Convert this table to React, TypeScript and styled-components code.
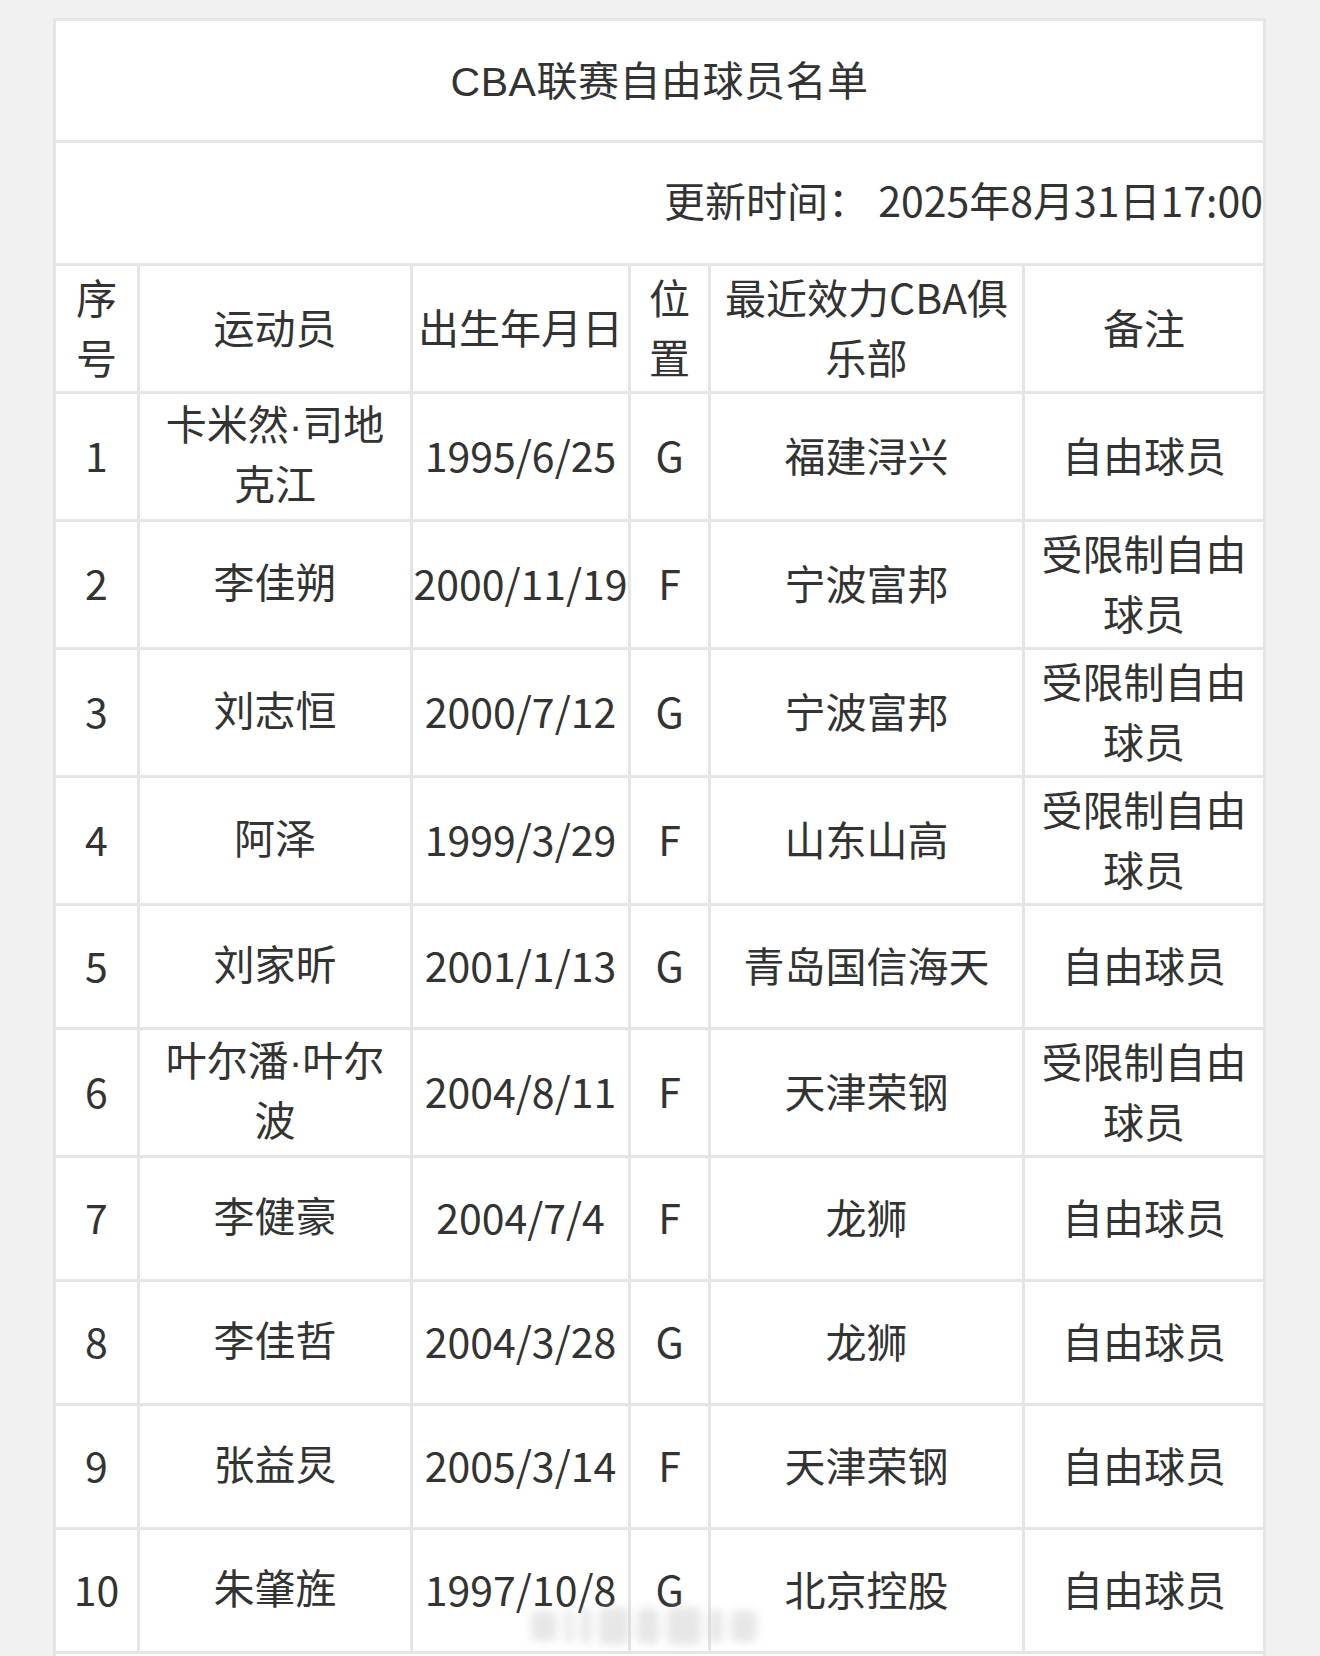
import { Fragment } from "react";
import styled, { createGlobalStyle } from "styled-components";

const GlobalStyle = createGlobalStyle`
  html, body {
    margin: 0;
    padding: 0;
    background: #f1f1f1;
  }
  body {
    font-family: "Noto Sans CJK SC", "Noto Sans", sans-serif;
    color: #333333;
  }
`

const Page = styled.section`
  min-height: 100vh;
  padding: 18px 0 0 53px;
  background-color: #f1f1f1;
`
const Table = styled.div`
  position: relative;
  display: grid;
  grid-template-columns: 81px 270px 215px 77px 311px 238px;
  grid-template-rows: 119px 120px;
  grid-auto-rows: minmax(121px, auto);
  gap: 3px;
  padding: 3px;
  width: max-content;
  background-color: #e5e5e5;
`
const TitleCell = styled.div`
  grid-column: 1 / -1;
  display: flex;
  align-items: center;
  justify-content: center;
  padding-bottom: 6px;
  background: #ffffff;
  font-family: "Liberation Sans", "Noto Sans CJK SC", sans-serif;
  font-size: 41px;
  letter-spacing: 0.5px;
  color: #333333;
`
const UpdateCell = styled.div`
  grid-column: 1 / -1;
  display: flex;
  align-items: center;
  justify-content: flex-end;
  padding-bottom: 8px;
  background: #ffffff;
  font-size: 41px;
  white-space: pre;
  color: #333333;
`
const Cell = styled.div<{ $pad?: number; $nowrap?: boolean }>`
  display: flex;
  align-items: center;
  justify-content: center;
  padding: 0 ${(p) => (p.$pad ?? 10)}px 5px;
  background: #ffffff;
  font-size: 41px;
  line-height: 60px;
  text-align: center;
  color: #333333;
  white-space: ${(p) => (p.$nowrap ? "nowrap" : "normal")};
`
/* names like 卡米然·司地克江 use the narrow Latin middle dot, so Latin font first */
const NameCell = styled(Cell)`
  padding-top: 2px;
  padding-bottom: 3px;
  font-family: "Liberation Sans", "Noto Sans CJK SC", sans-serif;
`
const FootCell = styled.div`
  grid-column: 1 / -1;
  background: #ffffff;
`
const Watermark = styled.div`
  position: absolute;
  left: 478px;
  top: 1588px;
  display: flex;
  align-items: center;
  gap: 8px;
  height: 40px;
  filter: blur(4px);
  opacity: 0.4;
  pointer-events: none;
`
const Blot = styled.span<{ $w: number; $h: number }>`
  display: block;
  width: ${(p) => p.$w}px;
  height: ${(p) => p.$h}px;
  border-radius: 6px;
  background: #c4c4c4;
`

interface Player {
  no: string;
  name: string;
  birth: string;
  pos: string;
  club: string;
  note: string;
}

const players: Player[] = [
  { no: "1", name: "卡米然·司地克江", birth: "1995/6/25", pos: "G", club: "福建浔兴", note: "自由球员" },
  { no: "2", name: "李佳朔", birth: "2000/11/19", pos: "F", club: "宁波富邦", note: "受限制自由球员" },
  { no: "3", name: "刘志恒", birth: "2000/7/12", pos: "G", club: "宁波富邦", note: "受限制自由球员" },
  { no: "4", name: "阿泽", birth: "1999/3/29", pos: "F", club: "山东山高", note: "受限制自由球员" },
  { no: "5", name: "刘家昕", birth: "2001/1/13", pos: "G", club: "青岛国信海天", note: "自由球员" },
  { no: "6", name: "叶尔潘·叶尔波", birth: "2004/8/11", pos: "F", club: "天津荣钢", note: "受限制自由球员" },
  { no: "7", name: "李健豪", birth: "2004/7/4", pos: "F", club: "龙狮", note: "自由球员" },
  { no: "8", name: "李佳哲", birth: "2004/3/28", pos: "G", club: "龙狮", note: "自由球员" },
  { no: "9", name: "张益炅", birth: "2005/3/14", pos: "F", club: "天津荣钢", note: "自由球员" },
  { no: "10", name: "朱肇旌", birth: "1997/10/8", pos: "G", club: "北京控股", note: "自由球员" },
];

export default function App() {
  return (
    <Page>
      <GlobalStyle />
      <Table>
        <TitleCell>CBA联赛自由球员名单</TitleCell>
        <UpdateCell>更新时间： 2025年8月31日17:00</UpdateCell>

        <Cell $pad={0}>序号</Cell>
        <Cell>运动员</Cell>
        <Cell $pad={0} $nowrap>出生年月日</Cell>
        <Cell $pad={0}>位置</Cell>
        <Cell>最近效力CBA俱乐部</Cell>
        <Cell>备注</Cell>

        {players.map((p) => (
          <Fragment key={p.no}>
            <Cell $pad={0}>{p.no}</Cell>
            <NameCell>{p.name}</NameCell>
            <Cell $pad={0} $nowrap>{p.birth}</Cell>
            <Cell $pad={0}>{p.pos}</Cell>
            <Cell>{p.club}</Cell>
            <Cell>{p.note}</Cell>
          </Fragment>
        ))}

        <FootCell />

        <Watermark>
          <Blot $w={26} $h={30} />
          <Blot $w={8} $h={34} />
          <Blot $w={10} $h={36} />
          <Blot $w={30} $h={38} />
          <Blot $w={22} $h={36} />
          <Blot $w={34} $h={38} />
          <Blot $w={14} $h={34} />
          <Blot $w={26} $h={32} />
        </Watermark>
      </Table>
    </Page>
  );
}
